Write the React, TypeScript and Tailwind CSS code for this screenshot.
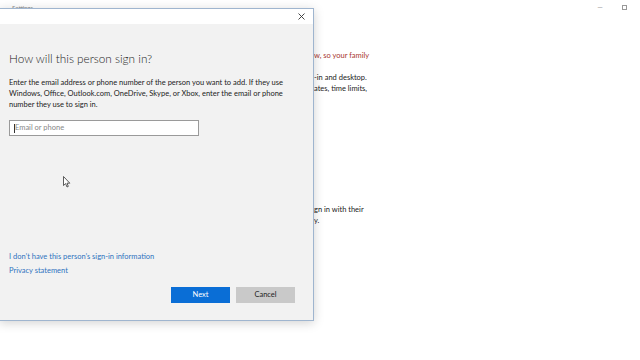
import React from "react";

const FONT = "font-['Lato','Liberation_Sans',sans-serif]";

function BackgroundWindow() {
  return (
    <div className={`flex h-[360px] w-[640px] flex-col bg-white text-[#222] ${FONT}`}>
      <div className="flex h-[14px] items-center justify-between pl-[12px] pr-[4px]">
        <span className="text-[6px] text-[#888]">Settings</span>
        <div className="flex items-center">
          <span className="flex w-[24px] justify-center text-[7px] text-[#999]">&#8212;</span>
          <span className="flex w-[24px] justify-center">
            <span className="h-[5px] w-[5px] border border-[#999]" />
          </span>
        </div>
      </div>
      {/* page text, only the part right of the dialog shows */}
      <div className="ml-[314px] flex flex-col pt-[36px] text-[7.5px] leading-[11px]">
        <p className="whitespace-nowrap text-[#a8362f]">w, so your family</p>
        <div className="mt-[11px] flex flex-col">
          <p className="whitespace-nowrap">-in and desktop.</p>
          <p className="whitespace-nowrap">ates, time limits,</p>
        </div>
        <div className="mt-[110px] flex flex-col">
          <p className="whitespace-nowrap">gn in with their</p>
          <p className="whitespace-nowrap">y.</p>
        </div>
      </div>
    </div>
  );
}

function Pointer() {
  return (
    <svg width="8" height="12" viewBox="0 0 8 12" className="absolute left-[63px] top-[176px]">
      <path d="M0.5 0.5 L0.5 9.5 L2.6 7.6 L4 11 L5.3 10.4 L4 7.2 L6.8 7.2 Z" fill="#fff" stroke="#333" strokeWidth="0.8" strokeLinejoin="round" />
    </svg>
  );
}

function SignInDialog() {
  return (
    <div
      className={`absolute left-[-1px] top-[8px] flex h-[313px] w-[315px] flex-col border border-[#9fb5cf] bg-[#f2f2f2] shadow-[0_2px_10px_rgba(0,0,0,0.18)] ${FONT}`}
    >
      <div className="flex h-[15px] items-center justify-end border-b border-white bg-white pr-[8px]">
        <svg width="7" height="7" viewBox="0 0 7 7">
          <path d="M0.5 0.5 L6.5 6.5 M6.5 0.5 L0.5 6.5" stroke="#333" strokeWidth="0.9" />
        </svg>
      </div>
      <div className="flex flex-1 flex-col pl-[9px] pr-[10px] pb-[17px]">
        <h1 className="mt-[27px] text-[11.75px] leading-[16px] font-light text-[#222]">
          How will this person sign in?
        </h1>
        <p className="mt-[10px] w-[285px] text-[7.5px] leading-[11px] text-[#222]">
          Enter the email address or phone number of the person you want to add. If they use
          Windows, Office, Outlook.com, OneDrive, Skype, or Xbox, enter the email or phone number
          they use to sign in.
        </p>
        <div className="mt-[10px] flex h-[16px] w-[190px] items-center border-[1.5px] border-[#9a9a9a] bg-white pl-[4px]">
          <span className="h-[9px] w-px bg-[#333]" />
          <span className="text-[7.5px] text-[#888]">Email or phone</span>
        </div>
        <div className="flex-1" />
        <div className="flex flex-col gap-[3.5px] text-[7.5px] leading-[11px] text-[#2f72bf]">
          <span>I don&#8217;t have this person&#8217;s sign-in information</span>
          <span>Privacy statement</span>
        </div>
        <div className="mt-[11px] flex justify-end gap-[6px] pr-[8px] text-[7.5px]">
          <button className="flex h-[16px] w-[59px] items-center justify-center bg-[#0a6ed6] text-white">
            Next
          </button>
          <button className="flex h-[16px] w-[59px] items-center justify-center bg-[#c9c9c9] text-[#222]">
            Cancel
          </button>
        </div>
      </div>
    </div>
  );
}

export default function App() {
  return (
    <div className="relative h-[360px] w-[640px] overflow-hidden bg-white">
      <BackgroundWindow />
      <SignInDialog />
      <Pointer />
    </div>
  );
}
